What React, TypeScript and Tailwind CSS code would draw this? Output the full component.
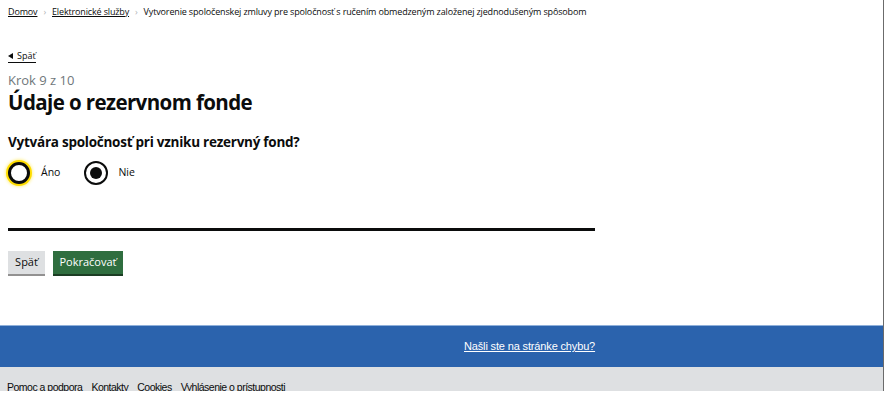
import React from "react";

export default function App() {
  const font = { fontFamily: '"Open Sans", "Noto Sans", sans-serif' };
  return (
    <div className="w-[884px] h-[420px] bg-white overflow-hidden" style={font}>
      <div className="w-[884px] h-[391px] border-r border-[#6b6b6b] flex flex-col">
        <main className="flex-1 px-2 text-[#0b0c0c]">
          <nav className="pt-[5px] flex items-center text-[9px] leading-[14px] tracking-[-0.15px]">
            <a className="underline text-[#0b0c0c]">Domov</a>
            <span className="mx-[6px] text-[#b1b4b6] text-[9px]">›</span>
            <a className="underline text-[#0b0c0c]">Elektronické služby</a>
            <span className="mx-[6px] text-[#b1b4b6] text-[9px]">›</span>
            <span>Vytvorenie spoločenskej zmluvy pre spoločnosť s ručením obmedzeným založenej zjednodušeným spôsobom</span>
          </nav>
          <div className="mt-[31px] flex">
            <a className="flex items-center gap-[4px] text-[9px] leading-[12px] border-b border-[#0b0c0c]">
              <svg width="5" height="6" viewBox="0 0 5 6"><path d="M5 0 L0 3 L5 6 Z" fill="#0b0c0c" /></svg>
              <span>Späť</span>
            </a>
          </div>
          <div className="mt-[8px] text-[13px] leading-[18px] text-[#6f777b]">Krok 9 z 10</div>
          <h1 className="text-[20.5px] leading-[26px] font-bold tracking-[-0.6px]">Údaje o rezervnom fonde</h1>
          <h2 className="mt-[18px] text-[13.5px] leading-[18px] font-bold tracking-[-0.25px]">Vytvára spoločnosť pri vzniku rezervný fond?</h2>
          <div className="mt-[9px] flex items-center h-[26px]">
            <label className="flex items-center">
              <span className="w-[22px] h-[22px] rounded-full border-[3px] border-[#0b0c0c] bg-white shadow-[0_0_0_2px_#ffdd00,0_0_3px_3px_#fff3a0]" />
              <span className="ml-[11px] text-[10.5px]">Áno</span>
            </label>
            <label className="flex items-center ml-[24px]">
              <span className="w-[24px] h-[24px] rounded-full border-[2px] border-[#0b0c0c] bg-white flex items-center justify-center">
                <span className="w-[12px] h-[12px] rounded-full bg-[#0b0c0c]" />
              </span>
              <span className="ml-[10px] text-[10.5px]">Nie</span>
            </label>
          </div>
          <div className="mt-[42px] w-[587px] h-[3px] bg-[#0b0c0c]" />
          <div className="mt-[20px] flex gap-[8px]">
            <button className="h-[23px] w-[37px] bg-[#dee0e2] text-[11px] text-[#0b0c0c] shadow-[0_2px_0_#929191]">Späť</button>
            <button className="h-[23px] w-[70px] bg-[#2f6e3f] text-[11px] text-white shadow-[0_2px_0_#1b3d23]">Pokračovať</button>
          </div>
        </main>
        <footer>
          <div className="h-[42px] bg-[#2b63ad] border-t border-[#8fb0da] flex items-center">
            <a className="ml-[464px] text-white underline text-[11px] tracking-[-0.15px]" style={{ fontFamily: '"Liberation Sans", sans-serif' }}>
              Našli ste na stránke chybu?
            </a>
          </div>
          <div className="h-[24px] bg-[#dee0e2] overflow-hidden">
            <div className="pl-[7px] pt-[13px] flex gap-[9px] text-[10.5px] leading-[14px] text-[#0b0c0c] tracking-[-0.5px]" style={{ fontFamily: '"Liberation Sans", sans-serif' }}>
              <span>Pomoc a podpora</span>
              <span>Kontakty</span>
              <span>Cookies</span>
              <span>Vyhlásenie o prístupnosti</span>
            </div>
          </div>
        </footer>
      </div>
    </div>
  );
}
